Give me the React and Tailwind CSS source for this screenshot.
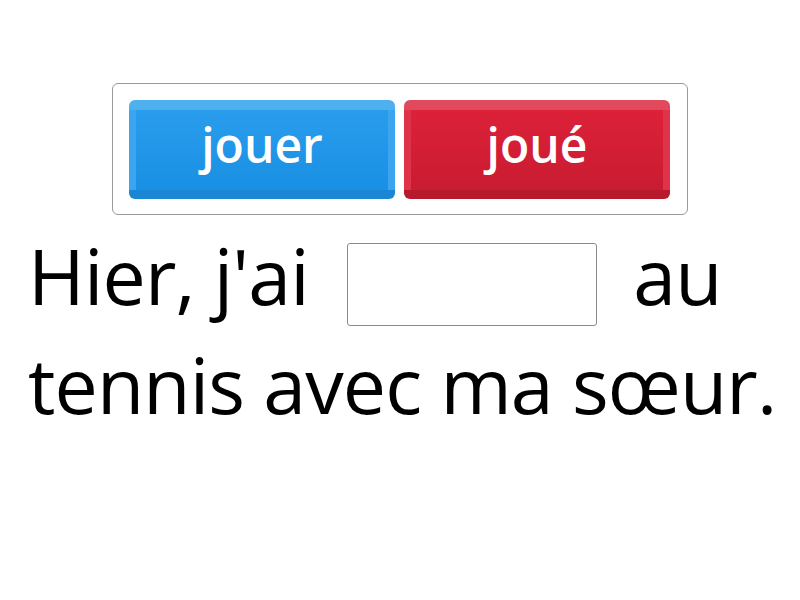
const OPTIONS = [
  {
    label: 'jouer',
    outer: 'bg-[#4fb0f0] border-b-[#1b86d4]',
    inner: 'from-[#2a9cec] to-[#1890e4]',
    side: 'border-x-[#3ba6ef]',
  },
  {
    label: 'joué',
    outer: 'bg-[#e14a5c] border-b-[#b71a2c]',
    inner: 'from-[#dc2139] to-[#c91c31]',
    side: 'border-x-[#de3348]',
  },
];

function OptionButton({ option }) {
  return (
    <button
      className={`w-[266px] h-[99px] rounded-[6px] overflow-hidden border-b-[9px] ${option.outer} flex flex-col`}
    >
      <div className="h-[10px] shrink-0" />
      <div
        className={`flex-1 border-x-[7px] ${option.side} bg-gradient-to-b ${option.inner} flex items-center justify-center`}
      >
        <span className="text-white text-[48px] font-semibold leading-none -mt-[10px]">
          {option.label}
        </span>
      </div>
    </button>
  );
}

export default function App() {
  return (
    <div
      className="w-[800px] h-[600px] bg-white overflow-hidden"
      style={{ fontFamily: '"Open Sans", "Noto Sans", sans-serif' }}
    >
      {/* Answer choices */}
      <div className="pt-[83px] flex justify-center">
        <div className="w-[576px] h-[132px] border border-[#999999] rounded-[6px] px-[16px] pt-[16px] flex gap-[9px]">
          {OPTIONS.map(o => (
            <OptionButton key={o.label} option={o} />
          ))}
        </div>
      </div>

      {/* Sentence */}
      <div className="pl-[28px] pr-[10px] pt-[6px] text-[77px] leading-[109px] tracking-[-0.85px] text-black">
        Hier, j'ai{' '}
        <span className="inline-block align-middle w-[250px] h-[83px] ml-[19px] mr-[17px] border border-[#8a8a8a] rounded-[3px] bg-white" />{' '}
        au tennis avec ma sœur.
      </div>
    </div>
  );
}
